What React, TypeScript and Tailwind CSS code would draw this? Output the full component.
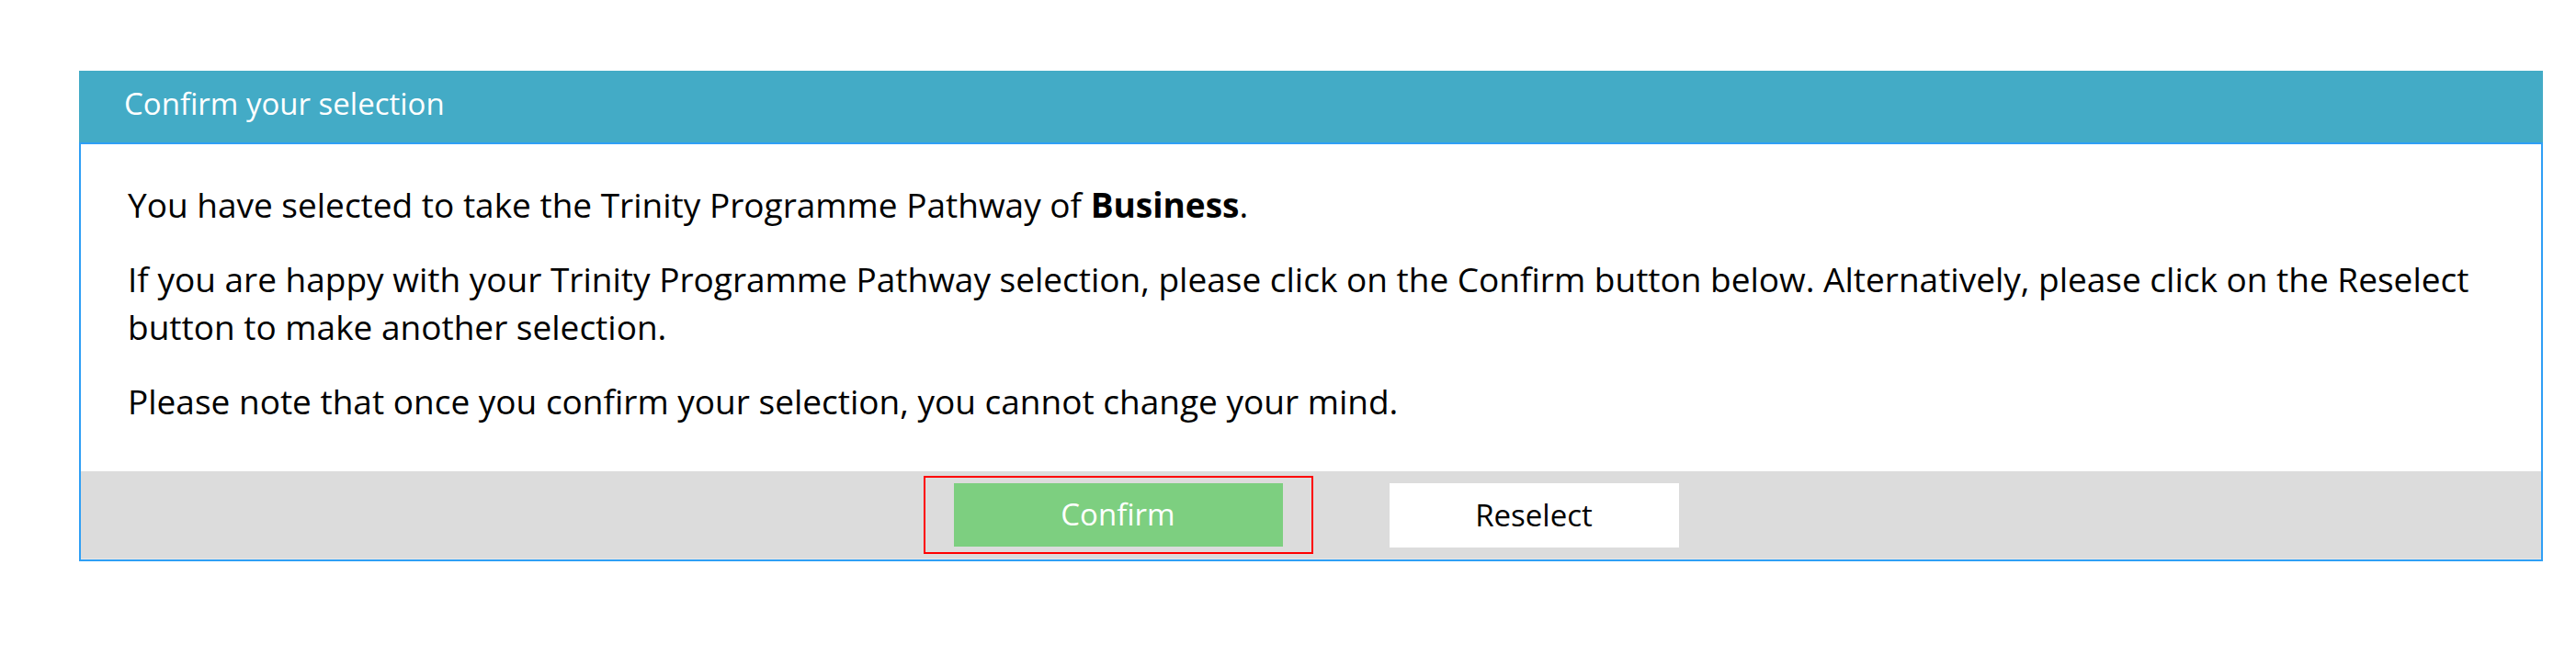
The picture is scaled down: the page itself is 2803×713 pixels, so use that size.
import React from "react";

export default function App() {
  return (
    <div className="min-h-[713px] w-[2803px] bg-white pt-[77px]" style={{ fontFamily: "'Open Sans', 'Noto Sans', sans-serif" }}>
      <div className="ml-[86px] w-[2681px]">
        <div className="flex h-[78px] items-center bg-[#43abc6] pb-[7px] pl-[49px] text-[33px] text-white">
          Confirm your selection
        </div>
        <div className="border-2 border-[#2f9ff5] bg-white">
          <div className="flex flex-col gap-[29px] pb-[50px] pl-[51px] pr-[30px] pt-[40px] text-[37px] leading-[52px] text-black">
            <p>
              You have selected to take the Trinity Programme Pathway of <b>Business</b>.
            </p>
            <p>
              If you are happy with your Trinity Programme Pathway selection, please click on the Confirm button below. Alternatively, please click on the Reselect
              <br />
              button to make another selection.
            </p>
            <p>Please note that once you confirm your selection, you cannot change your mind.</p>
          </div>
          <div className="flex h-[96px] items-center justify-center border-b border-[#e8e8e8] bg-[#dcdcdc] pr-[22px]">
            <div className="border-2 border-[#ff0000] px-[31px] py-[6px]">
              <button className="flex h-[69px] w-[358px] items-center justify-center bg-[#7dcf80] pb-[2px] text-[33px] text-white">
                Confirm
              </button>
            </div>
            <button className="ml-[83px] flex h-[70px] w-[315px] items-center justify-center bg-white text-[33px] text-black">
              Reselect
            </button>
          </div>
        </div>
      </div>
    </div>
  );
}
